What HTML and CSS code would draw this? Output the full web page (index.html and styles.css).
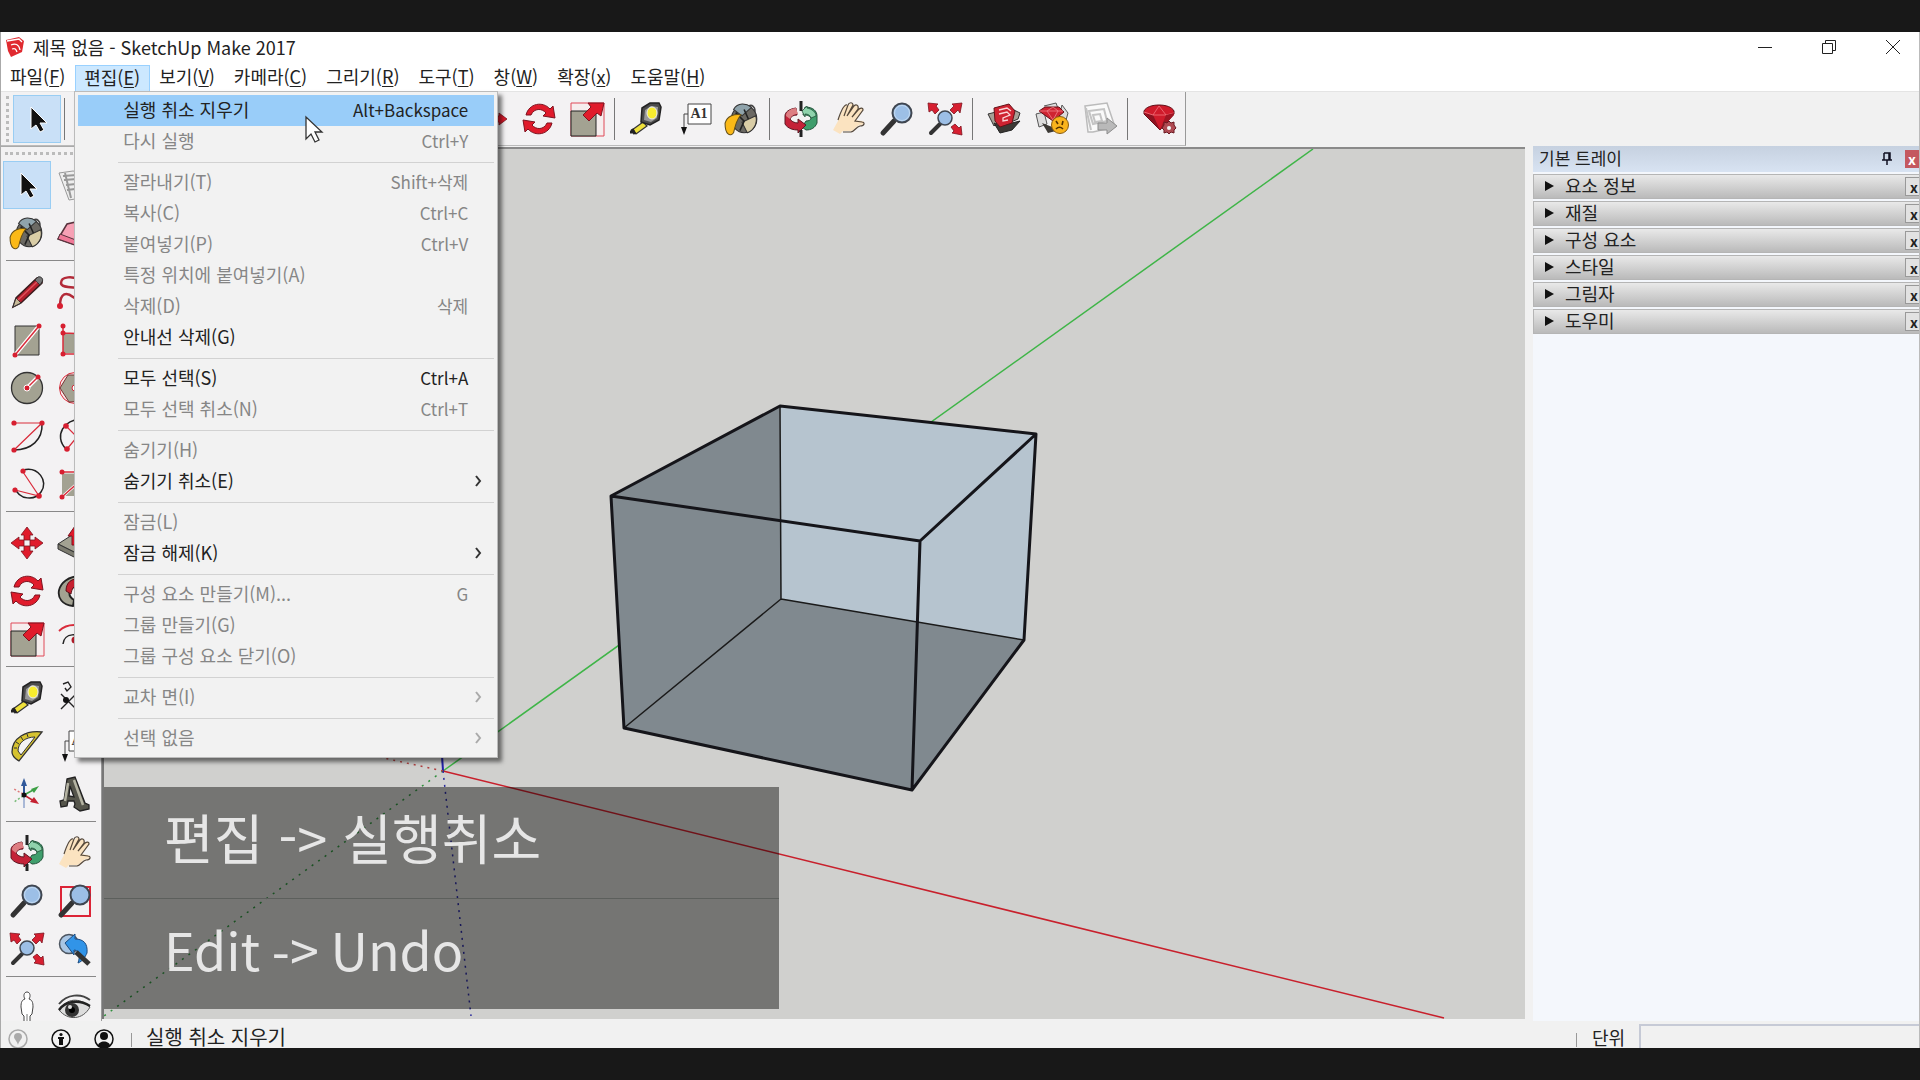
FILE: index.html
```html
<!DOCTYPE html>
<html lang="ko">
<head>
  <meta charset="UTF-8">
  <meta name="viewport" content="width=device-width, initial-scale=1.0">
  <title>제목 없음 - SketchUp Make 2017</title>
  <link rel="stylesheet" href="styles.css">
</head>
<body>
  <!-- Icon set -->
  <svg class="sprite" aria-hidden="true">
    <symbol id="i-select" viewBox="0 0 36 36">
      <path d="M12 6v22l5-4 4 7 4-2-4-7h7z" fill="#111" stroke="#fff" stroke-width="1"/>
    </symbol>
    <symbol id="i-component" viewBox="0 0 36 36">
      <path d="M2 6l14-2 16 3-8 24-12 2z" fill="#eee" stroke="#999"/>
      <path d="M6 9l14-1M7 13l13-1M9 18l10-1M10 23l8-1M8 6l6 25" fill="none" stroke="#999" stroke-width="2"/>
    </symbol>
    <symbol id="i-paint" viewBox="3 1 34 34">
      <path d="M24 8c4-6 11-2 7 8" fill="none" stroke="#444" stroke-width="1.5"/>
      <ellipse cx="22" cy="18" rx="12" ry="13" fill="#6b6963" stroke="#333"/>
      <path d="M12 9c4-7 12-6 17-2l-9 8z" fill="#8fa3ab" stroke="#333"/>
      <path d="M20 21l13-6c2 7-2 14-8 16z" fill="#d9cda6" stroke="#333"/>
      <path d="M14 12l8 8-4 9M22 9l4 9" fill="none" stroke="#222" stroke-width="1.5"/>
      <path d="M4 22c2-7 9-9 15-8-4 5-5 9-7 17-3 4-8 2-8-9z" fill="#fbb917" stroke="#665018"/>
    </symbol>
    <symbol id="i-eraser" viewBox="0 0 36 36">
      <path d="M1 24l9-15 22-5 2 8-10 20z" fill="#f7a1b5" stroke="#57323c" stroke-width="1.5"/>
      <path d="M1 24l2-5 21 8v5zM24 27L34 8" fill="#f07a98" stroke="#57323c"/>
    </symbol>
    <symbol id="i-line" viewBox="0 0 36 36">
      <path d="M4 33l3-9L28 4c3-1 6 2 5 5L12 29z" fill="#b31f2c" stroke="#3b1a1c" stroke-width="1.5"/>
      <path d="M4 33l3-9 5 5z" fill="#c8b998" stroke="#333"/>
      <path d="M26 6l3-3c3-1 6 2 4 5l-2 3z" fill="#777" stroke="#333"/>
      <path d="M9 26L28 8" stroke="#e0505a" stroke-width="1.5"/>
    </symbol>
    <symbol id="i-freehand" viewBox="0 0 36 36">
      <path d="M3 32c0-14 7-14 13-9s16 0 13-6S4 16 4 9s12-7 20-3" fill="none" stroke="#b32a38" stroke-width="2.5"/>
      <circle cx="3" cy="32" r="3" fill="#d71f30"/>
    </symbol>
    <symbol id="i-rect" viewBox="0 0 36 36">
      <path d="M6 4h24v29H6z" fill="#a3a292" stroke="#333"/>
      <path d="M6 33L30 4" stroke="#fff" stroke-width="4"/>
      <path d="M6 33L30 4" stroke="#d92c3b" stroke-width="1.5"/>
      <circle cx="6" cy="33" r="2.5" fill="#d71f30"/><circle cx="30" cy="4" r="2.5" fill="#d71f30"/>
    </symbol>
    <symbol id="i-rotrect" viewBox="0 0 36 36">
      <path d="M6 11h26v20H6z" fill="#a3a292"/>
      <path d="M6 4v28h26M6 11l26 1" fill="none" stroke="#d92c3b" stroke-width="1.5"/>
      <circle cx="6" cy="4" r="2.5" fill="#d71f30"/><circle cx="6" cy="11" r="2.5" fill="#d71f30"/><circle cx="6" cy="32" r="2.5" fill="#d71f30"/>
    </symbol>
    <symbol id="i-circle" viewBox="0 0 36 36">
      <circle cx="18" cy="18" r="15.5" fill="#a3a292" stroke="#333" stroke-width="1.3"/>
      <path d="M18 18L29 7" stroke="#fff" stroke-width="4"/>
      <path d="M18 18L29 7" stroke="#d92c3b" stroke-width="1.5"/>
      <circle cx="18" cy="18" r="3" fill="#d71f30" stroke="#fff"/><circle cx="29" cy="7" r="2.5" fill="#d71f30"/>
    </symbol>
    <symbol id="i-polygon" viewBox="0 0 36 36">
      <circle cx="18" cy="18" r="15.5" fill="#fbe9ea" stroke="#d92c3b"/>
      <path d="M11 5h15l8 13-8 13-14 1L3 18z" fill="#a3a292" stroke="#733"/>
      <circle cx="18" cy="18" r="3" fill="#fff" stroke="#d92c3b"/>
    </symbol>
    <symbol id="i-arc" viewBox="0 0 36 36">
      <path d="M33 5c1 17-11 27-28 27" fill="none" stroke="#222" stroke-width="1.5"/>
      <path d="M5 5h28L5 32" fill="none" stroke="#d92c3b" stroke-width="1.2"/>
      <circle cx="5" cy="5" r="2.6" fill="#d71f30"/><circle cx="33" cy="5" r="2.6" fill="#d71f30"/><circle cx="5" cy="32" r="2.6" fill="#d71f30"/>
    </symbol>
    <symbol id="i-arc2" viewBox="0 0 36 36">
      <path d="M24 2C8 0-4 18 9 31" fill="none" stroke="#222" stroke-width="1.5"/>
      <path d="M8 7l12 12L10 31" fill="none" stroke="#d92c3b" stroke-width="1.2"/>
      <circle cx="9" cy="8" r="2.8" fill="#d71f30"/><circle cx="10" cy="31" r="2.8" fill="#d71f30"/>
    </symbol>
    <symbol id="i-arc3" viewBox="0 0 36 36">
      <path d="M14 4c15-4 26 11 18 22-6 9-22 8-26-4" fill="none" stroke="#222" stroke-width="1.5"/>
      <path d="M14 6l16 24L6 24" fill="none" stroke="#d92c3b" stroke-width="1.2"/>
      <circle cx="14" cy="5" r="2.6" fill="#d71f30"/><circle cx="30" cy="30" r="2.8" fill="#d71f30"/><circle cx="6" cy="24" r="2.6" fill="#d71f30"/>
    </symbol>
    <symbol id="i-pie" viewBox="0 0 36 36">
      <path d="M5 6h28v24H5z" fill="#a3a292"/>
      <path d="M5 6h28L5 31" fill="none" stroke="#fff" stroke-width="3"/>
      <path d="M5 6h28L5 31" fill="none" stroke="#d92c3b" stroke-width="1.5"/>
      <circle cx="5" cy="6" r="2.5" fill="#d71f30"/><circle cx="5" cy="31" r="2.5" fill="#d71f30"/>
    </symbol>
    <symbol id="i-move" viewBox="0 0 36 36">
      <g id="arm"><path d="M18 2l6 8h-3v5h-6v-5h-3z" fill="#e01b2b" stroke="#7d1420" stroke-width=".8"/></g>
      <use href="#arm" transform="rotate(90 18 18)"/>
      <use href="#arm" transform="rotate(180 18 18)"/>
      <use href="#arm" transform="rotate(270 18 18)"/>
    </symbol>
    <symbol id="i-pushpull" viewBox="0 0 36 36">
      <path d="M1 19l14-9 19 8-13 11z" fill="#a3a292" stroke="#333"/>
      <path d="M1 19v5l20 10v-5zM21 29v5l13-11v-5z" fill="#7c7b6f" stroke="#333"/>
      <path d="M18 1l8 10h-4v9h-7v-9h-4z" fill="#e01b2b" stroke="#7d1420"/>
    </symbol>
    <symbol id="i-rotate" viewBox="0 0 36 36">
      <path d="M5 14C8 2 22 0 29 8l3-3 2 12-12-2 3-3C21 7 13 7 10 14z" fill="#e01b2b" stroke="#7d1420"/>
      <path d="M31 22C28 34 14 36 7 28l-3 3-2-12 12 2-3 3c4 5 12 5 15-2z" fill="#e01b2b" stroke="#7d1420"/>
    </symbol>
    <symbol id="i-follow" viewBox="0 0 36 36">
      <path d="M16 33C-6 31-2 3 24 3l-2 10c-10 0-13 9-5 14z" fill="#a3a292" stroke="#222" stroke-width="1.8"/>
      <path d="M9 18c0-9 6-13 14-12v7c-7-1-8 3-9 8z" fill="#c52130" stroke="#5c1018"/>
    </symbol>
    <symbol id="i-scale" viewBox="0 0 36 36">
      <path d="M2 2h33v33H2z" fill="#f6eeee" stroke="#e04a58"/>
      <path d="M2 10h25v25H2z" fill="#a3a292" stroke="#222"/>
      <path d="M35 2l-3 13-4-3-8 8-6-6 8-8-3-4z" fill="#e01b2b" stroke="#7d1420"/>
    </symbol>
    <symbol id="i-offset" viewBox="0 0 36 36">
      <path d="M2 10C10 2 24 2 33 10" fill="none" stroke="#d92c3b" stroke-width="1.8"/>
      <path d="M6 23C7 12 22 10 28 22" fill="none" stroke="#222" stroke-width="1.5"/>
      <circle cx="18" cy="19" r="3.5" fill="#b01b28"/>
    </symbol>
    <symbol id="i-tape" viewBox="0 0 36 36">
      <path d="M4 29l11-8 4 4-11 8z" fill="#eee03a" stroke="#333" stroke-width="1.3"/>
      <path d="M4 28l3 5M2 31h5" stroke="#222" stroke-width="3"/>
      <path d="M14 7l8-5h9l2 4-2 13-9 5-9-3z" fill="#4b4b4b" stroke="#222" stroke-width="1.5"/>
      <path d="M17 9l6-4 7 1-1 11-6 4-7-2z" fill="#999"/>
      <ellipse cx="24" cy="12" rx="5" ry="6" fill="#f7ec2e" stroke="#eee"/>
    </symbol>
    <symbol id="i-dimension" viewBox="0 0 36 36">
      <path d="M4 14l20 20M24 9L4 29M6 4l5-2 3 5-4 4-2-3" fill="none" stroke="#222" stroke-width="1.4"/>
      <circle cx="9" cy="20" r="3" fill="#111"/>
    </symbol>
    <symbol id="i-protractor" viewBox="0 0 36 36">
      <path d="M33 4C17 2 3 10 3 24c0 5 4 7 7 9z" fill="#d6c330" stroke="#333" stroke-width="1.3"/>
      <path d="M26 9C16 9 9 15 9 23l3 4z" fill="#f3f3f3" stroke="#333"/>
      <path d="M7 14l3 2M12 9l2 3M18 6l1 3M5 20h3" stroke="#333"/>
    </symbol>
    <symbol id="i-text" viewBox="0 0 36 36">
      <path d="M12 3h23v20H12z" fill="#fff" stroke="#444"/>
      <path d="M12 13H8v14" fill="none" stroke="#444"/>
      <path d="M5 26h6l-3 8z" fill="#111"/>
      <text x="23" y="17" text-anchor="middle" class="glyph-serif">A1</text>
    </symbol>
    <symbol id="i-axes" viewBox="0 0 36 36">
      <path d="M15 20V8" stroke="#31599b" stroke-width="2"/><path d="M15 2l3 8h-6z" fill="#31599b"/>
      <path d="M15 19l11-6" stroke="#3da045" stroke-width="1.5"/><path d="M30 10l-5 7-3-4z" fill="#3da045"/>
      <path d="M15 19l10 6" stroke="#c52130" stroke-width="1.5"/><path d="M30 28l-9-2 4-5z" fill="#c52130"/>
      <path d="M15 20v12" stroke="#a9b8d6" stroke-width="2"/>
      <path d="M14 18L5 13" stroke="#d77" stroke-width="1.5" stroke-dasharray="2"/>
      <path d="M14 20l-9 6" stroke="#7b7" stroke-width="1.5" stroke-dasharray="2"/>
      <circle cx="15" cy="19" r="2.5" fill="#111"/>
    </symbol>
    <symbol id="i-text3d" viewBox="0 0 36 36">
      <path fill-rule="evenodd" d="M10 3l8-2 10 26 4 2v4l-9 2-6-4 1-3-1-3h-6l-1 5-6 1-1-6 4-1zM13 10l-1 10 5 1z" fill="#55554b" stroke="#222" stroke-width="1.3"/>
      <path d="M17 4l9 25M11 7L8 25" stroke="#b5b4a3" stroke-width="2.5"/>
    </symbol>
    <symbol id="i-orbit" viewBox="0 0 36 36">
      <path d="M22 6c8 0 12 4 12 9v7c-2 5-6 7-11 7l-4-3 4-6c3 0 5-1 5-3-2-3-5-3-8-3z" fill="#3f9e6c" stroke="#24533b"/>
      <path d="M19 10l5-5v2c5 1 9 4 9 8l-5 2c-1-3-3-4-6-4v3z" fill="#8fd3ac" stroke="#24533b" stroke-width=".8"/>
      <path d="M13 7C6 8 2 11 2 15v8c3 5 9 6 13 6v3l8-8-8-6v4c-4 0-7-2-8-4 1-3 4-4 7-4z" fill="#c42238" stroke="#5c1822"/>
      <path d="M13 7C6 8 3 11 3 15l4 3c1-3 4-5 8-5z" fill="#dd7e82"/>
      <path d="M18 0v10M18 29v7" stroke="#222" stroke-width="3"/>
    </symbol>
    <symbol id="i-pan" viewBox="0 0 36 36">
      <path d="M9 33l3-3h8c4-1 5-5 9-6 5 0 5-4 2-4l-7-1 8-10c0-3-3-3-5 0 1-5-2-6-4-3 0-4-4-4-5-1-3-2-5 0-6 3L7 20l-5 9z" fill="#fbe3c0"/>
      <path d="M12 31h8c4-1 5-5 9-6 5 0 5-4 2-4l-7-1 8-11c0-3-3-2-5 0L21 16 27 8c1-4-2-5-4-3l-7 10 6-11c0-3-4-3-5 0l-4 11M16 4c-3-1-6 6-9 15" fill="none" stroke="#55483a" stroke-width="1.2"/>
    </symbol>
    <symbol id="i-zoom" viewBox="0 0 36 36">
      <path d="M4 32l11-12" stroke="#333" stroke-width="5" stroke-linecap="round"/>
      <circle cx="23" cy="12" r="9.5" fill="#9cbfe6" stroke="#3f4650" stroke-width="2"/>
      <circle cx="23" cy="12" r="7.5" fill="none" stroke="#c2d9f0"/>
    </symbol>
    <symbol id="i-zoomwin" viewBox="0 0 36 36">
      <path d="M4 4h29v29H4z" fill="none" stroke="#dc2436" stroke-width="2"/>
      <path d="M4 32l11-12" stroke="#333" stroke-width="5" stroke-linecap="round"/>
      <circle cx="23" cy="12" r="9.5" fill="#9cbfe6" stroke="#3f4650" stroke-width="2"/>
    </symbol>
    <symbol id="i-extents" viewBox="0 0 36 36">
      <path d="M4 32l9-9" stroke="#333" stroke-width="4" stroke-linecap="round"/>
      <circle cx="18" cy="17" r="7" fill="#9cbfe6" stroke="#3f4650" stroke-width="1.5"/>
      <path d="M1 2l10 1-2 2 3 4-4 4-3-4-3 2zM35 2l-2 10-2-3-4 4-4-4 4-4-2-2zM35 34l-10-2 2-2-3-4 4-3 4 4 2-2z" fill="#d71f30" stroke="#7d1420" stroke-width=".8"/>
    </symbol>
    <symbol id="i-previous" viewBox="0 0 36 36">
      <circle cx="12" cy="13" r="9.5" fill="#a9c6e4" stroke="#4c5560" stroke-width="1.5"/>
      <path d="M8 12l10-9v5c8 0 13 4 12 14-2 4-4 8-9 10 3-8 0-13-4-13v5z" fill="#3194e8" stroke="#1c4b80"/>
      <path d="M19 21l13 12" stroke="#333" stroke-width="5"/>
    </symbol>
    <symbol id="i-camera" viewBox="0 0 36 36">
      <path d="M18 2c3 0 4 4 2 7 3 1 4 3 4 8l-1 7-2 2v9h-6v-9l-2-2-1-7c0-5 1-7 4-8-2-3-1-7 2-7z" fill="#fff" stroke="#444"/>
      <path d="M18 24v8" stroke="#777"/>
    </symbol>
    <symbol id="i-look" viewBox="0 0 36 36">
      <path d="M2 20c8-12 20-13 31-3-7 13-22 14-31 3z" fill="#ddd" stroke="#555"/>
      <path d="M2 14C10 4 24 3 33 10" fill="none" stroke="#444" stroke-width="2"/>
      <path d="M2 20C8 11 22 9 33 16" fill="none" stroke="#222" stroke-width="2.5"/>
      <circle cx="15" cy="20" r="7" fill="#333"/><circle cx="15" cy="20" r="3" fill="#000"/><circle cx="13" cy="17" r="2" fill="#ddd"/>
    </symbol>
    <symbol id="i-warehouse" viewBox="0 0 36 36">
      <path d="M2 13l8-2 3 9-5 5zM34 12l-6-3-3 12 7-3z" fill="#a6a196" stroke="#333"/>
      <path d="M8 22l6 10 12-3 8-9-8 2-12 3z" fill="#3c3935" stroke="#222"/>
      <path d="M8 7l15-4 6 7-3 12-12 4-5-6z" fill="#cf2331" stroke="#631218"/>
      <path d="M13 9l8-2 4 3M13 13l8-2 3 3-7 3v3l5-1" fill="none" stroke="#fbd5d8" stroke-width="1.3"/>
    </symbol>
    <symbol id="i-extwarehouse" viewBox="0 0 36 36">
      <path d="M2 13l8-2 3 12-8 3zM34 12l-6-8-3 12 7 3zM10 5l12-3 3 8" fill="#ddd" stroke="#555"/>
      <path d="M8 22l6 10 12-3" fill="#3c3935"/>
      <path d="M5 10l6-4h14l5 5-11 9z" fill="#cf2331" stroke="#631218"/>
      <path d="M5 10h24M13 10l6 9 5-9-5-4z" fill="none" stroke="#f18289" stroke-width=".8"/>
      <circle cx="26" cy="24" r="8.5" fill="#f9b31c" stroke="#8a5d10"/>
      <path d="M22 20l2 3M29 20l-1 4M22 28c3-3 5-2 7 0" fill="none" stroke="#553300" stroke-width="1.6"/>
    </symbol>
    <symbol id="i-layout" viewBox="0 0 36 36">
      <path d="M3 5l22-3 8 24-22 5H6z" fill="#fafafa" stroke="#bbb" stroke-width="1.5"/>
      <path d="M7 10l15-2 3 12-14 3zM4 7l5 22M11 14l7-1 2 7-7 1z" fill="none" stroke="#c4c4c4" stroke-width="2"/>
      <path d="M16 22h9v-5l10 8-10 8v-4h-9z" fill="#b9b9b9" stroke="#8d8d8d"/>
    </symbol>
    <symbol id="i-gem" viewBox="0 0 36 36">
      <path d="M3 10c2-4 8-6 15-6s13 2 15 6v3L19 29 3 13z" fill="#cf1b2b" stroke="#5e0f18"/>
      <path d="M3 12l9 2 7 15z" fill="#8d1220"/>
      <path d="M12 14l6-9 7 9M3 11l9 3h13l8-2" fill="none" stroke="#f3747e" stroke-width=".8"/>
      <path d="M19 29l6-15 8-2v2z" fill="#a01523"/>
      <path d="M28 20l2 2 3-1v3l2 3-2 2v3l-3-1-2 2-2-2-3 1v-3l-2-2 2-3v-3l3 1z" fill="#b04a52" stroke="#6b1a22"/>
      <circle cx="28" cy="27" r="2" fill="#f2f2f2"/>
    </symbol>
  </svg>

  <div class="window">
    <header class="title-bar">
      <svg class="app-logo" viewBox="0 0 20 20" aria-hidden="true">
        <path d="M1 3l13-3 5 4-2 11-11 5-3-6z" fill="#e02a30"/>
        <path d="M2 4l12-2 3 3M6 8c4-2 8-1 9 5M7 12c3-1 4 0 5 3" fill="none" stroke="#fff" stroke-width="1.3"/>
      </svg>
      <h1>제목 없음 - SketchUp Make 2017</h1>
      <div class="window-controls">
        <button aria-label="최소화"><svg viewBox="0 0 16 16"><path d="M1 8.5h14"/></svg></button>
        <button aria-label="이전 크기로 복원"><svg viewBox="0 0 16 16"><path d="M1.500 4.500h10v10h-10zM4.500 4V1.500h10v10H12"/></svg></button>
        <button aria-label="닫기"><svg viewBox="0 0 16 16"><path d="M1 1l14 14M15 1L1 15"/></svg></button>
      </div>
    </header>

    <nav class="menu-bar">
      <button>파일(<u>F</u>)</button>
      <div class="menu-holder">
        <button class="open" aria-expanded="true">편집(<u>E</u>)</button>
        <ul class="menu">
          <li><button class="hover"><span>실행 취소 지우기</span><kbd>Alt+Backspace</kbd></button></li>
          <li><button disabled><span>다시 실행</span><kbd>Ctrl+Y</kbd></button></li>
          <li class="divider"></li>
          <li><button disabled><span>잘라내기(T)</span><kbd>Shift+삭제</kbd></button></li>
          <li><button disabled><span>복사(C)</span><kbd>Ctrl+C</kbd></button></li>
          <li><button disabled><span>붙여넣기(P)</span><kbd>Ctrl+V</kbd></button></li>
          <li><button disabled><span>특정 위치에 붙여넣기(A)</span></button></li>
          <li><button disabled><span>삭제(D)</span><kbd>삭제</kbd></button></li>
          <li><button><span>안내선 삭제(G)</span></button></li>
          <li class="divider"></li>
          <li><button><span>모두 선택(S)</span><kbd>Ctrl+A</kbd></button></li>
          <li><button disabled><span>모두 선택 취소(N)</span><kbd>Ctrl+T</kbd></button></li>
          <li class="divider"></li>
          <li><button disabled><span>숨기기(H)</span></button></li>
          <li><button class="submenu"><span>숨기기 취소(E)</span><svg viewBox="0 0 8 12"><path d="M2 1l4 5-4 5"/></svg></button></li>
          <li class="divider"></li>
          <li><button disabled><span>잠금(L)</span></button></li>
          <li><button class="submenu"><span>잠금 해제(K)</span><svg viewBox="0 0 8 12"><path d="M2 1l4 5-4 5"/></svg></button></li>
          <li class="divider"></li>
          <li><button disabled><span>구성 요소 만들기(M)...</span><kbd>G</kbd></button></li>
          <li><button disabled><span>그룹 만들기(G)</span></button></li>
          <li><button disabled><span>그룹 구성 요소 닫기(O)</span></button></li>
          <li class="divider"></li>
          <li><button class="submenu" disabled><span>교차 면(I)</span><svg viewBox="0 0 8 12"><path d="M2 1l4 5-4 5"/></svg></button></li>
          <li class="divider"></li>
          <li><button class="submenu" disabled><span>선택 없음</span><svg viewBox="0 0 8 12"><path d="M2 1l4 5-4 5"/></svg></button></li>
        </ul>
        <svg class="pointer" viewBox="0 0 20 28" aria-hidden="true">
          <path d="M2 2v22l5-5 4 8 4-2-4-8h7z" fill="#fff" stroke="#333" stroke-width="1.3"/>
        </svg>
      </div>
      <button>보기(<u>V</u>)</button>
      <button>카메라(<u>C</u>)</button>
      <button>그리기(<u>R</u>)</button>
      <button>도구(<u>T</u>)</button>
      <button>창(<u>W</u>)</button>
      <button>확장(<u>x</u>)</button>
      <button>도움말(<u>H</u>)</button>
    </nav>

    <div class="toolbar-row">
      <div class="toolbar">
        <span class="grip"></span>
        <button class="tool active" aria-label="선택"><svg><use href="#i-select"/></svg></button>
        <span class="separator"></span>
        <button class="tool" aria-label="지우개"><svg><use href="#i-eraser"/></svg></button>
        <button class="tool" aria-label="선"><svg><use href="#i-line"/></svg></button>
        <button class="tool" aria-label="호"><svg><use href="#i-arc"/></svg></button>
        <button class="tool" aria-label="직사각형"><svg><use href="#i-rect"/></svg></button>
        <button class="tool" aria-label="원"><svg><use href="#i-circle"/></svg></button>
        <button class="tool" aria-label="다각형"><svg><use href="#i-polygon"/></svg></button>
        <span class="separator"></span>
        <button class="tool" aria-label="밀기/끌기"><svg><use href="#i-pushpull"/></svg></button>
        <button class="tool" aria-label="오프셋"><svg><use href="#i-offset"/></svg></button>
        <button class="tool" aria-label="이동"><svg><use href="#i-move"/></svg></button>
        <button class="tool" aria-label="회전"><svg><use href="#i-rotate"/></svg></button>
        <button class="tool" aria-label="배율"><svg><use href="#i-scale"/></svg></button>
        <span class="separator"></span>
        <button class="tool" aria-label="줄자"><svg><use href="#i-tape"/></svg></button>
        <button class="tool" aria-label="텍스트"><svg><use href="#i-text"/></svg></button>
        <button class="tool" aria-label="페인트 통"><svg><use href="#i-paint"/></svg></button>
        <span class="separator"></span>
        <button class="tool" aria-label="궤도"><svg><use href="#i-orbit"/></svg></button>
        <button class="tool" aria-label="이동 보기"><svg><use href="#i-pan"/></svg></button>
        <button class="tool" aria-label="확대/축소"><svg><use href="#i-zoom"/></svg></button>
        <button class="tool" aria-label="범위 확대"><svg><use href="#i-extents"/></svg></button>
        <span class="separator"></span>
        <button class="tool" aria-label="3D Warehouse"><svg><use href="#i-warehouse"/></svg></button>
        <button class="tool" aria-label="Extension Warehouse"><svg><use href="#i-extwarehouse"/></svg></button>
        <button class="tool" aria-label="LayOut으로 보내기"><svg><use href="#i-layout"/></svg></button>
        <span class="separator"></span>
        <button class="tool" aria-label="확장 관리자"><svg><use href="#i-gem"/></svg></button>
      </div>
    </div>

    <div class="workspace">
      <aside class="tool-palette">
        <span class="grip"></span>
        <div class="tool-group">
          <button class="tool active" aria-label="선택"><svg><use href="#i-select"/></svg></button>
          <button class="tool" aria-label="구성 요소 만들기"><svg><use href="#i-component"/></svg></button>
          <button class="tool" aria-label="페인트 통"><svg><use href="#i-paint"/></svg></button>
          <button class="tool" aria-label="지우개"><svg><use href="#i-eraser"/></svg></button>
        </div>
        <div class="tool-group">
          <button class="tool" aria-label="선"><svg><use href="#i-line"/></svg></button>
          <button class="tool" aria-label="자유곡선"><svg><use href="#i-freehand"/></svg></button>
          <button class="tool" aria-label="직사각형"><svg><use href="#i-rect"/></svg></button>
          <button class="tool" aria-label="회전된 직사각형"><svg><use href="#i-rotrect"/></svg></button>
          <button class="tool" aria-label="원"><svg><use href="#i-circle"/></svg></button>
          <button class="tool" aria-label="다각형"><svg><use href="#i-polygon"/></svg></button>
          <button class="tool" aria-label="호"><svg><use href="#i-arc"/></svg></button>
          <button class="tool" aria-label="2점 호"><svg><use href="#i-arc2"/></svg></button>
          <button class="tool" aria-label="3점 호"><svg><use href="#i-arc3"/></svg></button>
          <button class="tool" aria-label="파이"><svg><use href="#i-pie"/></svg></button>
        </div>
        <div class="tool-group">
          <button class="tool" aria-label="이동"><svg><use href="#i-move"/></svg></button>
          <button class="tool" aria-label="밀기/끌기"><svg><use href="#i-pushpull"/></svg></button>
          <button class="tool" aria-label="회전"><svg><use href="#i-rotate"/></svg></button>
          <button class="tool" aria-label="따라가기"><svg><use href="#i-follow"/></svg></button>
          <button class="tool" aria-label="배율"><svg><use href="#i-scale"/></svg></button>
          <button class="tool" aria-label="오프셋"><svg><use href="#i-offset"/></svg></button>
        </div>
        <div class="tool-group">
          <button class="tool" aria-label="줄자"><svg><use href="#i-tape"/></svg></button>
          <button class="tool" aria-label="치수"><svg><use href="#i-dimension"/></svg></button>
          <button class="tool" aria-label="각도기"><svg><use href="#i-protractor"/></svg></button>
          <button class="tool" aria-label="텍스트"><svg><use href="#i-text"/></svg></button>
          <button class="tool" aria-label="축"><svg><use href="#i-axes"/></svg></button>
          <button class="tool" aria-label="3D 텍스트"><svg><use href="#i-text3d"/></svg></button>
        </div>
        <div class="tool-group">
          <button class="tool" aria-label="궤도"><svg><use href="#i-orbit"/></svg></button>
          <button class="tool" aria-label="이동 보기"><svg><use href="#i-pan"/></svg></button>
          <button class="tool" aria-label="확대/축소"><svg><use href="#i-zoom"/></svg></button>
          <button class="tool" aria-label="창 확대"><svg><use href="#i-zoomwin"/></svg></button>
          <button class="tool" aria-label="범위 확대"><svg><use href="#i-extents"/></svg></button>
          <button class="tool" aria-label="이전"><svg><use href="#i-previous"/></svg></button>
        </div>
        <div class="tool-group">
          <button class="tool" aria-label="카메라 배치"><svg><use href="#i-camera"/></svg></button>
          <button class="tool" aria-label="둘러보기"><svg><use href="#i-look"/></svg></button>
        </div>
      </aside>

      <main class="viewport">
        <svg class="scene" viewBox="104 149 1422 870" preserveAspectRatio="xMinYMin slice" role="img" aria-label="3D 상자 모델">
          <!-- axes -->
          <g fill="none" stroke-width="1.5">
            <path d="M443 771L1313 149" stroke="#3fb548"/>
            <path d="M443 771L1444 1018" stroke="#c8202c"/>
            <path d="M443 771L441 740" stroke="#2222aa" stroke-width="2"/>
            <path d="M443 771L104 1016" stroke="#2f8f3c" stroke-dasharray="2 6"/>
            <path d="M443 771L104 697" stroke="#b04040" stroke-dasharray="2 5"/>
            <path d="M443 771L471 1016" stroke="#2a2a9c" stroke-dasharray="2 5"/>
          </g>
          <!-- faces -->
          <path d="M780 406L1036 434 1024 640 781 599z" fill="#b6c4cf"/>
          <path d="M780 406L611 496 624 728 781 599z" fill="#80898f"/>
          <path d="M781 599L1024 640 912 790 624 728z" fill="#80898f"/>
          <!-- edges -->
          <path d="M780 406L781 599 624 728M781 599L1024 640" fill="none" stroke="#1a1a1a" stroke-width="1.5"/>
          <path d="M780 406L1036 434 1024 640 912 790 624 728 611 496zM611 496L920 541 1036 434M920 541L912 790" fill="none" stroke="#15151a" stroke-width="3" stroke-linejoin="round"/>
        </svg>
        <div class="caption">
          <p>편집 -&gt; 실행취소</p>
          <p lang="en">Edit -&gt; Undo</p>
        </div>
      </main>

      <aside class="tray">
        <div class="tray-header">
          <h2>기본 트레이</h2>
          <button class="pin" aria-label="자동 숨기기"><svg viewBox="0 0 12 14"><path d="M3 1h6v7M3 1v7M1 8h10M6 8v5M8 1v7" fill="none" stroke="#112" stroke-width="1.5"/></svg></button>
          <button class="tray-close" aria-label="트레이 닫기">x</button>
        </div>
        <section class="panel"><button class="panel-title">요소 정보</button><button class="panel-close" aria-label="닫기">x</button></section>
        <section class="panel"><button class="panel-title">재질</button><button class="panel-close" aria-label="닫기">x</button></section>
        <section class="panel"><button class="panel-title">구성 요소</button><button class="panel-close" aria-label="닫기">x</button></section>
        <section class="panel"><button class="panel-title">스타일</button><button class="panel-close" aria-label="닫기">x</button></section>
        <section class="panel"><button class="panel-title">그림자</button><button class="panel-close" aria-label="닫기">x</button></section>
        <section class="panel"><button class="panel-title">도우미</button><button class="panel-close" aria-label="닫기">x</button></section>
      </aside>
    </div>

    <footer class="status-bar">
      <div class="status-icons">
        <svg viewBox="0 0 20 20"><circle cx="10" cy="10" r="9" fill="none" stroke="#aaa" stroke-width="1.5"/><path d="M10 4a4 4 0 0 1 4 4c0 2-3 4-4 8-1-4-4-6-4-8a4 4 0 0 1 4-4z" fill="#aaa"/></svg>
        <svg viewBox="0 0 20 20"><circle cx="10" cy="10" r="9" fill="none" stroke="#111" stroke-width="1.5"/><circle cx="10" cy="5.500" r="1.600" fill="#111"/><path d="M7 8h6v2h-1v6H8v-6H7z" fill="#111"/></svg>
        <svg viewBox="0 0 20 20"><circle cx="10" cy="10" r="9" fill="none" stroke="#111" stroke-width="1.500"/><circle cx="10" cy="7" r="4" fill="#111"/><path d="M4 17c0-6 12-6 12 0l-6 3z" fill="#111"/></svg>
      </div>
      <span class="bar-line"></span>
      <span class="hint">실행 취소 지우기</span>
      <span class="bar-line"></span>
      <label for="measure">단위</label>
      <input id="measure" type="text">
    </footer>
  </div>
</body>
</html>
```

FILE: styles.css
```css
* {
  box-sizing: border-box;
}
body {
  margin: 0;
  height: 100vh;
  padding: 32px 0;
  background-color: #181818;
  color: #222;
  font-family: "Noto Sans CJK KR", sans-serif;
  font-size: 18px;
  overflow: hidden;
}
button {
  border: 0;
  padding: 0;
  background: none;
  color: inherit;
  font: inherit;
}
h1, h2, p, ul {
  margin: 0;
  padding: 0;
  font-size: inherit;
  font-weight: 400;
}
.sprite {
  display: none;
}
.glyph-serif {
  font-family: "Liberation Serif", serif;
  font-size: 14px;
  font-weight: 700;
  fill: #333;
}
.window {
  height: 100%;
  display: flex;
  flex-direction: column;
  background-color: #f1f1f1;
  border-left: 1px solid #aaa;
  border-right: 1px solid #bbb;
  overflow: hidden;
}

/* Title bar */
.title-bar {
  display: flex;
  align-items: center;
  height: 32px;
  padding: 0 18px 2px 4px;
  background-color: #fff;
}
.title-bar h1 {
  flex: 1;
  line-height: 30px;
}
.app-logo {
  width: 20px;
  height: 20px;
  margin-right: 8px;
}
.window-controls {
  display: flex;
  gap: 48px;
}
.window-controls button,
.window-controls svg {
  display: block;
  width: 16px;
  height: 16px;
}
.window-controls path {
  fill: none;
  stroke: #222;
}

/* Menu bar */
.menu-bar {
  display: flex;
  height: 27px;
  background-color: #fff;
}
.menu-bar > button,
.menu-holder > button {
  height: 27px;
  padding: 0 9px 3px 8px;
  border: 1px solid transparent;
  line-height: 22px;
}
.menu-bar u {
  text-underline-offset: 2px;
}
.menu-holder {
  position: relative;
}
.menu-holder > .open {
  background-color: #cce8ff;
  border-color: #99d1ff;
}
.menu {
  position: absolute;
  z-index: 10;
  top: 100%;
  left: -1px;
  width: 424px;
  padding: 3px;
  list-style: none;
  background-color: #f2f2f2;
  border: 1px solid #bbb;
  box-shadow: 4px 4px 4px rgba(0, 0, 0, 0.5);
}
.menu button {
  display: flex;
  justify-content: space-between;
  align-items: center;
  width: 100%;
  height: 31px;
  padding: 0 26px 2px 45px;
  line-height: 29px;
}
.menu button:disabled {
  color: #868686;
}
.menu .submenu {
  padding-right: 12px;
}
.menu .hover {
  background-color: #99cdf9;
}
.menu kbd {
  font: inherit;
  font-size: 17px;
}
.menu svg {
  width: 8px;
  height: 12px;
  fill: none;
  stroke: #333;
  stroke-width: 2;
}
.menu button:disabled svg {
  stroke: #aaa;
}
.divider {
  height: 1px;
  margin: 5px 0 4px 40px;
  background-color: #d2d2d2;
}
.pointer {
  position: absolute;
  z-index: 11;
  top: 51px;
  left: 229px;
  width: 20px;
  height: 28px;
}

/* Toolbars */
.toolbar-row {
  display: flex;
  height: 55px;
  border-top: 1px solid #e4e4e4;
}
.toolbar {
  display: flex;
  align-items: center;
  padding: 0 2px 0 5px;
  background-color: #f3f2f3;
  border-right: 1px solid #999;
  border-bottom: 1px solid #bbb;
}
.toolbar .grip {
  width: 3px;
  height: 46px;
  margin-right: 4px;
  border-left: 3px dotted #bbb;
}
.tool {
  display: grid;
  place-items: center;
  width: 48px;
  height: 48px;
  border: 1px solid transparent;
}
.tool svg {
  width: 36px;
  height: 36px;
}
.tool.active {
  background-color: #c9e0f7;
  border-color: #99cdf3;
}
.separator {
  width: 8px;
  height: 42px;
  margin-left: 3px;
  border-left: 1px solid #777;
}
.workspace {
  flex: 1;
  min-height: 0;
  display: flex;
}
.tool-palette {
  width: 101px;
  padding: 5px 2px 0;
  background-color: #f3f2f3;
  border-top: 1px solid #aaa;
  border-right: 1px solid #999;
  overflow: hidden;
}
.tool-palette .grip {
  display: block;
  height: 3px;
  margin: 0 2px 6px;
  border-top: 3px dotted #bbb;
}
.tool-group {
  display: grid;
  grid-template-columns: 48px 48px;
}
.tool-group + .tool-group {
  margin: 3px 3px 0;
  padding-top: 7px;
  border-top: 1px solid #888;
}
.tool-group + .tool-group .tool {
  margin-left: -3px;
}

/* Drawing area */
.viewport {
  position: relative;
  flex: 1;
  min-width: 0;
  margin: 1px 0 2px;
  background-color: #d0d0ce;
  border-top: 2px solid #8a8a8a;
  border-left: 2px solid #777;
  overflow: hidden;
}
.scene {
  display: block;
  width: 100%;
  height: 100%;
}
.caption {
  position: absolute;
  left: 0;
  bottom: 10px;
  width: 675px;
  background-color: rgba(0, 0, 0, 0.44);
  color: #e6e6e6;
  font-size: 54px;
  font-weight: 300;
}
.caption p {
  height: 111px;
  padding-left: 60px;
  line-height: 99px;
}
.caption p + p {
  border-top: 1px solid #5c5f5c;
  font-size: 52px;
}

/* Tray */
.tray {
  width: 386px;
  margin-left: 8px;
  background-color: #f4f7fc;
}
.tray-header {
  display: flex;
  align-items: center;
  height: 26px;
  padding-left: 6px;
  margin-bottom: 2px;
  background: linear-gradient(#c6d1e0, #d8e3f2);
}
.tray-header h2 {
  flex: 1;
  padding-bottom: 2px;
  font-size: 17px;
  line-height: 24px;
}
.pin,
.pin svg {
  display: block;
  width: 12px;
  height: 14px;
}
.tray-close {
  width: 14px;
  height: 18px;
  margin-left: 12px;
  background-color: #c4585f;
  color: #fff;
  font-size: 14px;
  font-weight: 700;
  line-height: 14px;
}
.panel {
  display: flex;
  align-items: center;
  height: 25px;
  margin-bottom: 2px;
  border: 1px solid #b5b5b5;
  border-right: 0;
  background: linear-gradient(#e9e9e9, #bababa);
}
.panel-title {
  flex: 1;
  display: flex;
  align-items: center;
  height: 23px;
  padding: 0 0 3px 11px;
  line-height: 20px;
  text-align: left;
}
.panel-title::before {
  content: "";
  margin: 2px 11px 0 0;
  border: 5px solid transparent;
  border-left: 9px solid #111;
  border-right: 0;
}
.panel-close {
  width: 14px;
  height: 19px;
  padding-left: 3px;
  border: 1px solid #999;
  border-right: 0;
  background-color: #e2e2e2;
  font-size: 14px;
  font-weight: 700;
  line-height: 14px;
}

/* Status bar */
.status-bar {
  display: flex;
  align-items: flex-start;
  height: 27px;
  overflow: hidden;
  line-height: 32px;
}
.status-icons {
  display: flex;
  gap: 23px;
  padding: 8px 17px 0 7px;
}
.status-icons svg {
  width: 20px;
  height: 20px;
}
.bar-line {
  width: 1px;
  height: 14px;
  margin-top: 12px;
  background-color: #999;
}
.hint {
  flex: 1;
  padding-left: 14px;
  font-size: 20px;
}
.status-bar label {
  padding: 0 14px 0 15px;
}
.status-bar input {
  width: 280px;
  height: 32px;
  margin-top: 3px;
  border: 2px solid #c6cad6;
  border-right: 0;
  background-color: #f1f1f1;
  font: inherit;
}
```
